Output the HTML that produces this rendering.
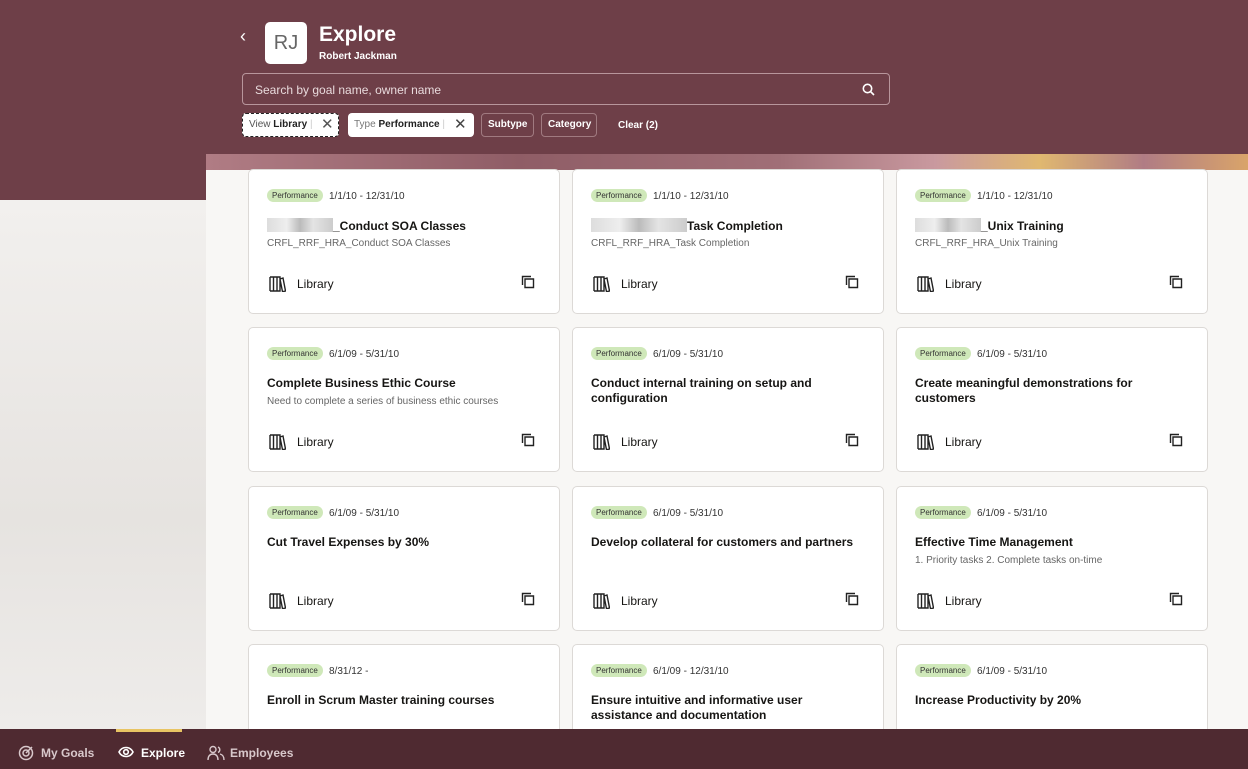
<!DOCTYPE html>
<html><head><meta charset="utf-8"><style>
*{box-sizing:border-box;margin:0;padding:0}
html,body{width:1248px;height:769px;overflow:hidden}
body{font-family:"Liberation Sans",sans-serif;background:#efedeb;position:relative;color:#161513}
.hdr{position:absolute;left:0;top:0;width:1248px;height:200px;background:#6e3f48}
.left{position:absolute;left:0;top:200px;width:206px;height:530px;background:linear-gradient(180deg,#f2f0ee,#e6e3e0 60%,#eeecea)}
.panel{position:absolute;left:206px;top:154px;width:1042px;height:576px;background:#f8f7f5}
.strip{position:absolute;left:206px;top:154px;width:1042px;height:16px;background:linear-gradient(90deg,#b07c84,#8f5d66 30%,#a06f77 55%,#c9999f 70%,#e0b870 80%,#b07c84 90%,#d9a46a)}
.back{position:absolute;left:240px;top:26px;color:#fff;font-size:18px}
.av{position:absolute;left:265px;top:22px;width:42px;height:42px;background:#fff;border-radius:5px;color:#666;font-size:20px;text-align:center;line-height:42px}
.t1{position:absolute;left:319px;top:23px;color:#fff;font-weight:bold;font-size:21px}
.t2{position:absolute;left:319px;top:51px;color:#fff;font-weight:bold;font-size:10px}
.search{position:absolute;left:242px;top:73px;width:648px;height:32px;border:1px solid #b8969c;border-radius:4px;color:#e8dadc;font-size:12px;padding:9px 12px}
.chip{position:absolute;top:113px;height:24px;border-radius:4px;font-size:10px;line-height:22px;padding:0 6px}
#cards{position:absolute;left:0;top:0;width:1248px;height:729px;overflow:hidden}
.card{position:absolute;width:312px;height:145px;background:#fff;border:1px solid #dcd9d6;border-radius:5px}
.card .b{position:absolute;left:18px;top:19px;background:#cfe8b9;border-radius:8px;font-size:8px;padding:2px 5px;color:#333}
.card .d{position:absolute;left:80px;top:21px;font-size:10px;color:#333}
.card .ti{position:absolute;left:18px;top:48px;width:270px;font-size:12px;font-weight:bold;line-height:15px}
.card .s{position:absolute;left:18px;top:68px;font-size:10px;color:#666}
.card .lib{position:absolute;left:48px;top:107px;font-size:12px}
.card .li{position:absolute;left:20px;top:106px}
.card .cp{position:absolute;left:272px;top:105px}
.bot{position:absolute;left:0;top:729px;width:1248px;height:40px;background:#4f2a31;color:#d8c8cb;font-size:12px;font-weight:bold;z-index:5}
.bot span{position:absolute;top:17px}
</style></head><body>
<div class="hdr"></div><div class="left"></div><div class="panel"></div><div class="strip"></div>
<div class="back">&#8249;</div>
<div class="av">RJ</div><div class="t1">Explore</div><div class="t2">Robert Jackman</div>
<div class="search">Search by goal name, owner name<svg style="position:absolute;right:14px;top:9px" width="13" height="13" viewBox="0 0 13 13"><circle cx="5.5" cy="5.5" r="4.2" stroke="#fff" stroke-width="1.6" fill="none"/><path d="M8.5 8.5L12 12" stroke="#fff" stroke-width="1.6"/></svg></div>
<div class="chip" style="left:242px;width:97px;background:#fff;border:1px dashed #222;color:#555">View <b style="color:#222">Library</b> <span style="color:#ccc">|</span> <span style="font-size:15px;position:absolute;left:78px;top:0">✕</span></div>
<div class="chip" style="left:348px;width:126px;background:#fff;color:#777;line-height:24px">Type <b style="color:#222">Performance</b> <span style="color:#ccc">|</span> <span style="font-size:15px;position:absolute;left:106px;top:0;color:#444">✕</span></div>
<div class="chip" style="left:481px;width:53px;border:1px solid #a07a80;color:#fff;font-weight:bold">Subtype</div>
<div class="chip" style="left:541px;width:56px;border:1px solid #a07a80;color:#fff;font-weight:bold">Category</div>
<div class="chip" style="left:612px;color:#fff;font-weight:bold;line-height:26px">Clear (2)</div>

<div id="cards"></div>
<script>
var d=[["1/1/10 - 12/31/10","_Conduct SOA Classes","CRFL_RRF_HRA_Conduct SOA Classes",1],["1/1/10 - 12/31/10","Task Completion","CRFL_RRF_HRA_Task Completion",1],["1/1/10 - 12/31/10","_Unix Training","CRFL_RRF_HRA_Unix Training",1],
["6/1/09 - 5/31/10","Complete Business Ethic Course","Need to complete a series of business ethic courses"],["6/1/09 - 5/31/10","Conduct internal training on setup and configuration",""],["6/1/09 - 5/31/10","Create meaningful demonstrations for customers",""],
["6/1/09 - 5/31/10","Cut Travel Expenses by 30%",""],["6/1/09 - 5/31/10","Develop collateral for customers and partners",""],["6/1/09 - 5/31/10","Effective Time Management","1. Priority tasks 2. Complete tasks on-time"],
["8/31/12 -","Enroll in Scrum Master training courses",""],["6/1/09 - 12/31/10","Ensure intuitive and informative user assistance and documentation",""],["6/1/09 - 5/31/10","Increase Productivity by 20%",""]];
var xs=[248,572,896],ys=[169,327,486,644],h='';
var lib='<svg class="li" width="17" height="16" viewBox="0 0 17 16" fill="none" stroke="#222" stroke-width="1.4"><path d="M1 1v14M1 1h10v14H1M4.5 1v14M8 1v14M11 3l3-1 2.5 13-3 .7z"/></svg>';
var cp='<svg class="cp" width="14" height="14" viewBox="0 0 14 14" fill="none" stroke="#222" stroke-width="1.4"><path d="M4 4h8.5v8.5H4z"/><path d="M1.5 10V1.5H10"/></svg>';
d.forEach(function(c,i){var x=xs[i%3],y=ys[Math.floor(i/3)];
var t=c[3]?'<span style="display:inline-block;width:'+(i==1?96:66)+'px;height:14px;vertical-align:-2px;background:linear-gradient(90deg,#ddd,#eee 30%,#bbb 50%,#e4e4e4 70%,#ccc)"></span>'+c[1]:c[1];
h+='<div class="card" style="left:'+x+'px;top:'+y+'px"><span class="b">Performance</span><span class="d">'+c[0]+'</span><div class="ti">'+t+'</div>'+(c[2]?'<div class="s" style="top:'+(c[1].length>40?82:68)+'px">'+c[2]+'</div>':'')+lib+'<span class="lib">Library</span>'+cp+'</div>';});
document.getElementById('cards').innerHTML=h;
</script>
<div class="bot">
<div style="position:absolute;left:116px;top:0;width:66px;height:3px;background:#e8c463"></div>
<svg style="position:absolute;left:18px;top:16px" width="16" height="16" viewBox="0 0 16 16" fill="none" stroke="#d8c8cb" stroke-width="1.5"><circle cx="8" cy="8" r="6.5"/><circle cx="8" cy="8" r="3"/><path d="M8 8l6-6"/></svg><span style="left:41px">My Goals</span>
<svg style="position:absolute;left:118px;top:17px" width="16" height="12" viewBox="0 0 16 12" fill="none" stroke="#fff" stroke-width="1.6"><path d="M1 6C4 0 12 0 15 6C12 12 4 12 1 6z"/><circle cx="8" cy="6" r="2.3"/></svg><span style="left:141px;color:#fff">Explore</span>
<svg style="position:absolute;left:207px;top:16px" width="18" height="16" viewBox="0 0 18 16" fill="none" stroke="#d8c8cb" stroke-width="1.4"><circle cx="6" cy="4.5" r="3"/><path d="M1 15c0-4 2-6 5-6s5 2 5 6M11 2a3 3 0 010 5.5M13 9c2 .5 4 2 4 6"/></svg><span style="left:230px">Employees</span>
</div>
</body></html>
